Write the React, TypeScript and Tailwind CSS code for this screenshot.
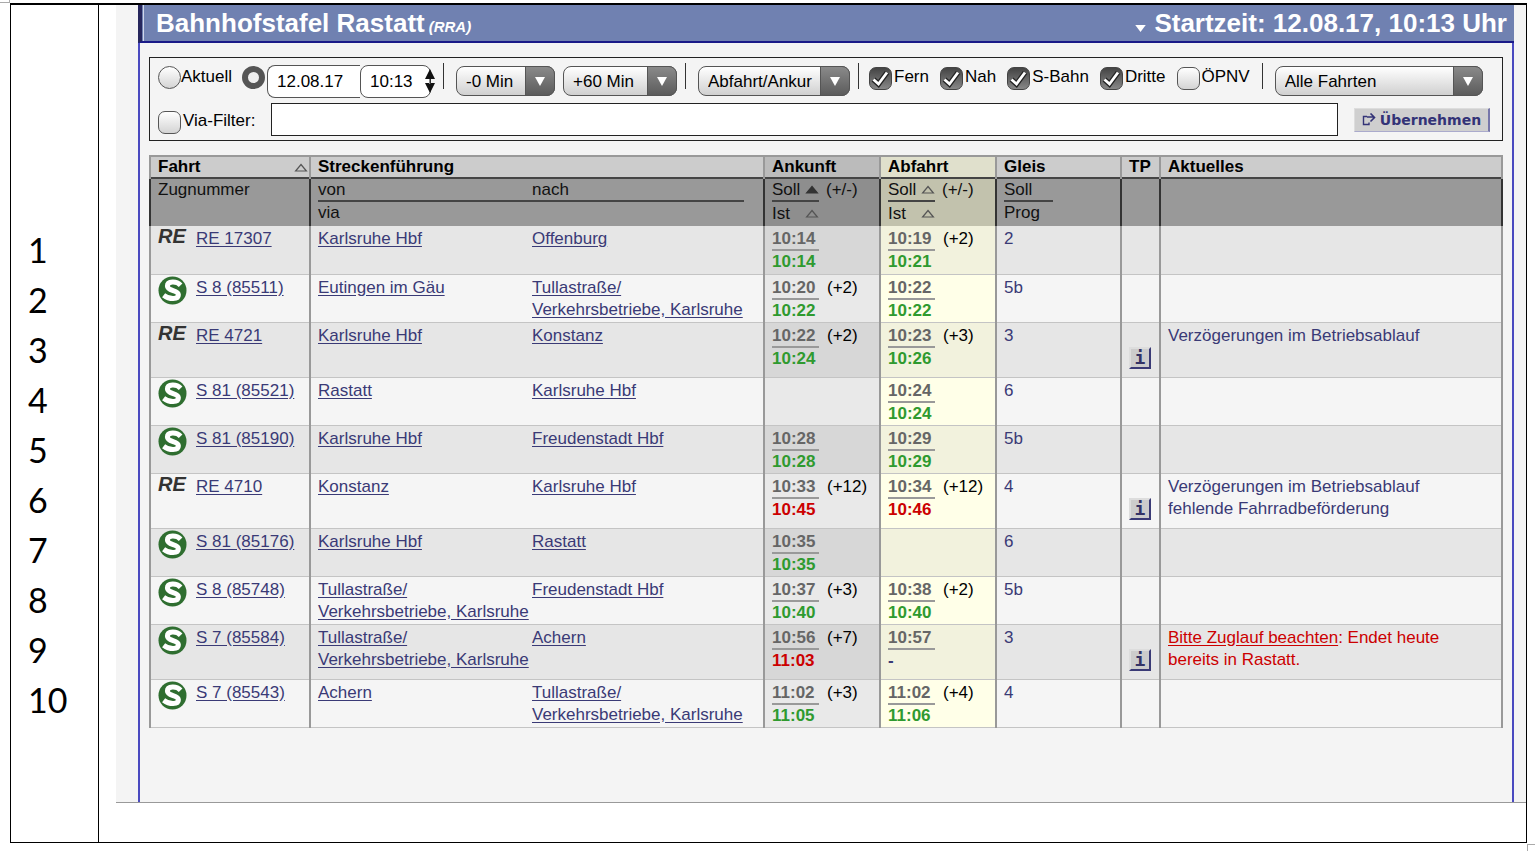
import clsx from "clsx";

type Time = {
  plan: string;
  real: string;
  delay?: string;
  late?: boolean;
};

type Train = {
  kind: "RE" | "S";
  name: string;
  from: string[];
  to: string[];
  arrival?: Time;
  departure?: Time;
  track: string;
  news?: string[];
  warning?: { link: string; text: string[] };
};

const TULLA = ["Tullastraße/", "Verkehrsbetriebe, Karlsruhe"];

const trains: Train[] = [
  {
    kind: "RE",
    name: "RE 17307",
    from: ["Karlsruhe Hbf"],
    to: ["Offenburg"],
    arrival: { plan: "10:14", real: "10:14" },
    departure: { plan: "10:19", real: "10:21", delay: "(+2)" },
    track: "2",
  },
  {
    kind: "S",
    name: "S 8 (85511)",
    from: ["Eutingen im Gäu"],
    to: TULLA,
    arrival: { plan: "10:20", real: "10:22", delay: "(+2)" },
    departure: { plan: "10:22", real: "10:22" },
    track: "5b",
  },
  {
    kind: "RE",
    name: "RE 4721",
    from: ["Karlsruhe Hbf"],
    to: ["Konstanz"],
    arrival: { plan: "10:22", real: "10:24", delay: "(+2)" },
    departure: { plan: "10:23", real: "10:26", delay: "(+3)" },
    track: "3",
    news: ["Verzögerungen im Betriebsablauf"],
  },
  {
    kind: "S",
    name: "S 81 (85521)",
    from: ["Rastatt"],
    to: ["Karlsruhe Hbf"],
    departure: { plan: "10:24", real: "10:24" },
    track: "6",
  },
  {
    kind: "S",
    name: "S 81 (85190)",
    from: ["Karlsruhe Hbf"],
    to: ["Freudenstadt Hbf"],
    arrival: { plan: "10:28", real: "10:28" },
    departure: { plan: "10:29", real: "10:29" },
    track: "5b",
  },
  {
    kind: "RE",
    name: "RE 4710",
    from: ["Konstanz"],
    to: ["Karlsruhe Hbf"],
    arrival: { plan: "10:33", real: "10:45", delay: "(+12)", late: true },
    departure: { plan: "10:34", real: "10:46", delay: "(+12)", late: true },
    track: "4",
    news: ["Verzögerungen im Betriebsablauf", "fehlende Fahrradbeförderung"],
  },
  {
    kind: "S",
    name: "S 81 (85176)",
    from: ["Karlsruhe Hbf"],
    to: ["Rastatt"],
    arrival: { plan: "10:35", real: "10:35" },
    track: "6",
  },
  {
    kind: "S",
    name: "S 8 (85748)",
    from: TULLA,
    to: ["Freudenstadt Hbf"],
    arrival: { plan: "10:37", real: "10:40", delay: "(+3)" },
    departure: { plan: "10:38", real: "10:40", delay: "(+2)" },
    track: "5b",
  },
  {
    kind: "S",
    name: "S 7 (85584)",
    from: TULLA,
    to: ["Achern"],
    arrival: { plan: "10:56", real: "11:03", delay: "(+7)", late: true },
    departure: { plan: "10:57", real: "-" },
    track: "3",
    warning: {
      link: "Bitte Zuglauf beachten",
      text: [": Endet heute", "bereits in Rastatt."],
    },
  },
  {
    kind: "S",
    name: "S 7 (85543)",
    from: ["Achern"],
    to: TULLA,
    arrival: { plan: "11:02", real: "11:05", delay: "(+3)" },
    departure: { plan: "11:02", real: "11:06", delay: "(+4)" },
    track: "4",
  },
];

const products = [
  { id: "fern", label: "Fern", checked: true },
  { id: "nah", label: "Nah", checked: true },
  { id: "sbahn", label: "S-Bahn", checked: true },
  { id: "dritte", label: "Dritte", checked: true },
  { id: "oepnv", label: "ÖPNV", checked: false },
];

function SortIcon({ active = false }: { active?: boolean }) {
  return (
    <svg viewBox="0 0 14 9" className="h-[9px] w-[14px] shrink-0">
      <path
        d="M7 1.5 L12.4 8 H1.6 Z"
        fill={active ? "#333" : "none"}
        stroke={active ? "#333" : "#555"}
        strokeWidth="1.2"
      />
    </svg>
  );
}

function SBahnLogo() {
  return (
    <svg viewBox="0 0 30 30" className="h-[30px] w-[30px] shrink-0" aria-label="S-Bahn">
      <circle cx="14.5" cy="15.5" r="14" fill="#2f6e30" />
      <path
        d="M22.6 10.2 C18.5 5.8 9.4 6 9.4 11 C9.4 16.4 20.4 14.8 20.4 19.8 C20.4 24.8 11.5 24.8 5.6 20.2"
        fill="none"
        stroke="#fff"
        strokeWidth="5"
      />
    </svg>
  );
}

function Check({ id, label, checked }: { id: string; label: string; checked: boolean }) {
  return (
    <div className="flex items-start">
      <span className="relative mt-1 h-[23px] w-[23px]">
        <input
          type="checkbox"
          id={id}
          defaultChecked={checked}
          className="peer block h-[23px] w-[23px] appearance-none rounded-[7px] border border-[#555] bg-linear-to-b from-white to-[#d4d4d4] checked:border-[#444] checked:from-[#444] checked:to-[#888]"
        />
        <svg
          viewBox="0 0 23 23"
          className="pointer-events-none absolute inset-0 hidden h-[23px] w-[23px] peer-checked:block"
        >
          <path d="M4.5 12.5 L9.5 17 L18 5.5" fill="none" stroke="#222" strokeWidth="5.4" />
          <path d="M4.5 12.5 L9.5 17 L18 5.5" fill="none" stroke="#fff" strokeWidth="2.8" />
        </svg>
      </span>
      <label htmlFor={id} className="ml-0.5">
        {label}
      </label>
    </div>
  );
}

function Select({ label, value, className }: { label: string; value: string; className: string }) {
  return (
    <div className={clsx("relative mt-[3px] h-[30px]", className)}>
      <select
        aria-label={label}
        className="block h-full w-full appearance-none rounded-lg border border-[#555] bg-linear-to-b from-white to-[#d0d0d0] pr-7 pl-[9px] text-black"
      >
        <option>{value}</option>
      </select>
      <span className="pointer-events-none absolute inset-y-0 right-0 flex w-[30px] items-center justify-center rounded-r-lg border border-[#555] bg-linear-to-b from-[#8a8a8a] to-[#5c5c5c]">
        <svg viewBox="0 0 10 9" className="h-[9px] w-[10px]">
          <path d="M0 0 H10 L5 9 Z" fill="#fff" />
        </svg>
      </span>
    </div>
  );
}

function Divider({ className }: { className: string }) {
  return <span className={clsx("h-[26px] w-px shrink-0 bg-[#333]", className)} />;
}

function Links({ lines }: { lines: string[] }) {
  return (
    <a href="#" className="block whitespace-nowrap pt-0.5 underline underline-offset-2">
      {lines.map((line) => (
        <span key={line} className="block">
          {line}
        </span>
      ))}
    </a>
  );
}

function TimeCell({ time }: { time?: Time }) {
  if (!time) return null;

  return (
    <div className="flex gap-2 leading-[21px]">
      <div className="w-[47px] font-bold">
        <div className="border-b-2 border-[#999] pt-0.5 text-[#666]">{time.plan}</div>
        <div
          className={clsx(
            time.real === "-" ? "text-[#3a3a76]" : time.late ? "text-[#cc0000]" : "text-[#2f9a2f]"
          )}
        >
          {time.real}
        </div>
      </div>
      <span className="pt-0.5 text-black">{time.delay}</span>
    </div>
  );
}

function TimeHead({ active }: { active?: boolean }) {
  return (
    <div className="flex gap-[7px]">
      <div className="w-[47px]">
        <div className="flex h-[23px] items-center justify-between border-b-2 border-[#444]">
          Soll
          <SortIcon active={active} />
        </div>
        <div className="flex h-[22px] items-center justify-between">
          Ist
          <SortIcon />
        </div>
      </div>
      <span>(+/-)</span>
    </div>
  );
}

function Filters() {
  return (
    <form className="mx-[9px] mt-[14px] flex h-[84px] flex-col justify-between border border-[#222] px-2 pt-[5px] pb-1 text-[17px] leading-[27px]">
      <div className="flex items-start pr-[11px]">
        <input
          type="radio"
          name="zeit"
          id="aktuell"
          className="mt-[3px] h-[23px] w-[23px] appearance-none rounded-full border border-[#555] bg-linear-to-b from-white to-[#d4d4d4]"
        />
        <label htmlFor="aktuell">Aktuell</label>
        <input
          type="radio"
          name="zeit"
          defaultChecked
          aria-label="Startzeit"
          className="mt-[3px] ml-2.5 h-[23px] w-[23px] appearance-none rounded-full border-[6px] border-[#555] bg-[#eee]"
        />
        <div className="mt-0.5 ml-0.5 flex h-[33px]">
          <input
            aria-label="Datum"
            defaultValue="12.08.17"
            className="w-[93px] rounded-l-lg border border-r-0 border-[#555] bg-white pl-[9px]"
          />
          <div className="relative">
            <input
              aria-label="Uhrzeit"
              defaultValue="10:13"
              className="h-full w-[71px] rounded-lg border border-[#555] bg-white pl-[9px]"
            />
            <svg viewBox="0 0 10 24" className="absolute top-1 -right-1 h-6 w-2.5">
              <path d="M5 0 L10 10 H0 Z M5 24 L10 14 H0 Z M4.5 9 H5.5 V15 H4.5 Z" fill="#111" />
            </svg>
          </div>
        </div>
        <Divider className="ml-3" />
        <Select label="Minuten vorher" value="-0 Min" className="ml-3 w-[99px]" />
        <Select label="Minuten nachher" value="+60 Min" className="ml-2 w-[114px]" />
        <Divider className="ml-2" />
        <Select label="Richtung" value="Abfahrt/Ankur" className="ml-3 w-[152px]" />
        <Divider className="ml-2" />
        <div className="ml-2.5 flex gap-[11px]">
          {products.map((product) => (
            <Check key={product.id} {...product} />
          ))}
        </div>
        <Divider className="ml-3" />
        <Select label="Fahrten" value="Alle Fahrten" className="ml-3 flex-1" />
      </div>

      <div className="flex items-start">
        <div className="pt-1">
          <Check id="via" label="Via-Filter:" checked={false} />
        </div>
        <input
          aria-label="Via-Filter"
          className="ml-4 h-[33px] min-w-0 flex-1 border border-[#222] bg-white px-2"
        />
        <button
          type="button"
          className="mt-[5px] mr-1 ml-4 flex h-6 w-[136px] items-center justify-center gap-1 border border-r-2 border-[#ddd] border-r-[#7777aa] border-b-[#aaaacc] bg-[#cfcfcf] font-['DejaVu_Sans',sans-serif] text-sm leading-5 font-bold text-[#333377]"
        >
          <svg viewBox="0 0 14 14" className="h-[14px] w-[14px]" fill="none" stroke="#333377">
            <path d="M5 3.5 H1.5 V11.5 H7 V9.5" strokeWidth="1.4" />
            <path d="M5 4 H12 M8.5 0.5 L12.5 4.5 L8.5 8.5" strokeWidth="1.6" />
          </svg>
          Übernehmen
        </button>
      </div>
    </form>
  );
}

const cell = "border-x-2 border-[#999] px-[7px] align-top";
const bodyCell = "border-x-2 border-b border-[#999] border-b-[#c4c4c4] px-[7px] align-top";
const darkCell = "border-x-2 border-t-2 border-[#333] border-t-[#444] px-[7px] align-top font-normal";

function Board() {
  return (
    <table className="mx-[9px] mt-[14px] w-[calc(100%-18px)] table-fixed border-collapse text-left text-[17px] leading-[22px] text-[#3a3a76]">
      <colgroup>
        <col className="w-[160px]" />
        <col className="w-[454px]" />
        <col className="w-[116px]" />
        <col className="w-[116px]" />
        <col className="w-[125px]" />
        <col className="w-[39px]" />
        <col />
      </colgroup>
      <thead className="text-black">
        <tr className="h-[22px] border-t-2 border-[#999] bg-[#cccccc] leading-5">
          <th className={cell}>
            <div className="-mr-1.5 flex items-center justify-between">
              Fahrt
              <SortIcon />
            </div>
          </th>
          <th className={cell}>Streckenführung</th>
          <th className={clsx(cell, "bg-[#bbbbbb]")}>Ankunft</th>
          <th className={clsx(cell, "bg-[#e0e0cc]")}>Abfahrt</th>
          <th className={cell}>Gleis</th>
          <th className={cell}>TP</th>
          <th className={cell}>Aktuelles</th>
        </tr>
        <tr className="h-[48px] bg-[#999999] leading-[21px] text-[#111]">
          <th className={darkCell}>Zugnummer</th>
          <th className={darkCell}>
            <div className="mr-3 flex border-b-2 border-[#444]">
              <span className="w-[214px]">von</span>
              <span>nach</span>
            </div>
            via
          </th>
          <th className={clsx(darkCell, "bg-[#8e8e8e]")}>
            <TimeHead active />
          </th>
          <th className={clsx(darkCell, "bg-[#c2c2ad]")}>
            <TimeHead />
          </th>
          <th className={darkCell}>
            <div className="h-[23px] w-[49px] border-b-2 border-[#444]">Soll</div>
            Prog
          </th>
          <th className={darkCell}></th>
          <th className={darkCell}></th>
        </tr>
      </thead>
      <tbody>
        {trains.map((train, index) => {
          const odd = index % 2 === 0;
          const hasInfo = train.news || train.warning;

          return (
            <tr
              key={train.name}
              className={clsx(
                odd ? "bg-[#e6e6e6]" : "bg-[#f5f5f5]",
                hasInfo ? "h-[55px]" : "h-[48px]"
              )}
            >
              <td className={bodyCell}>
                <div className="flex items-start">
                  <span className="h-[22px] w-[38px] shrink-0">
                    {train.kind === "RE" ? (
                      <span className="block text-xl leading-5 font-bold text-[#333] italic">
                        RE
                      </span>
                    ) : (
                      <SBahnLogo />
                    )}
                  </span>
                  <Links lines={[train.name]} />
                </div>
              </td>
              <td className={bodyCell}>
                <div className="flex">
                  <div className="w-[214px] shrink-0">
                    <Links lines={train.from} />
                  </div>
                  <Links lines={train.to} />
                </div>
              </td>
              <td className={clsx(bodyCell, odd ? "bg-[#d7d7d7]" : "bg-[#e9e9e9]")}>
                <TimeCell time={train.arrival} />
              </td>
              <td className={clsx(bodyCell, odd ? "bg-[#f2f2dd]" : "bg-[#ffffe8]")}>
                <TimeCell time={train.departure} />
              </td>
              <td className={clsx(bodyCell, "pt-0.5")}>{train.track}</td>
              <td className={bodyCell}>
                {hasInfo && (
                  <button
                    type="button"
                    aria-label="Information"
                    className="mt-6 flex h-[22px] w-[22px] items-center justify-center border-2 border-[#ddd] border-r-[#3a3a76] border-b-[#3a3a76] bg-[#ccc] font-['DejaVu_Sans_Mono',monospace] text-lg leading-5 font-bold text-[#333366]"
                  >
                    i
                  </button>
                )}
              </td>
              <td className={clsx(bodyCell, "pt-0.5")}>
                {train.news?.map((line) => (
                  <div key={line}>{line}</div>
                ))}
                {train.warning && (
                  <div className="text-[#cc0000]">
                    <p>
                      <a href="#" className="underline underline-offset-2">
                        {train.warning.link}
                      </a>
                      {train.warning.text[0]}
                    </p>
                    <p>{train.warning.text[1]}</p>
                  </div>
                )}
              </td>
            </tr>
          );
        })}
      </tbody>
    </table>
  );
}

export default function App() {
  return (
    <div className="relative min-h-screen bg-white pt-[3px] pr-2 pb-2 pl-2.5 font-['Liberation_Sans',Arial,sans-serif] text-black">
      {/* page corner marks */}
      <span className="absolute top-0 left-0 h-[3px] w-2.5 border-r border-b border-[#aaa]" />
      <span className="absolute right-0 bottom-0 h-[7px] w-2 border-t border-l border-[#aaa]" />

      <div className="flex min-h-[840px] border border-t-2 border-black">
        <ol className="w-[88px] shrink-0 border-r border-black pt-[220px] pl-[17px] font-['Lato',sans-serif] text-[34px] leading-[50px]">
          {trains.map((train, index) => (
            <li key={train.name}>{index + 1}</li>
          ))}
        </ol>

        <div className="flex-1 pb-[39px] pl-[17px]">
          <div className="h-full border-b border-[#999] bg-[#f4f4f4] pr-3 pl-[22px]">
            <main className="h-full border-x-2 border-[#4a4ac0]">
              <header className="-mx-0.5 flex h-[38px] border-b-2 border-l-4 border-[#1a1a88] border-l-[#26265c] bg-[#7081b1] font-bold text-white">
                <div className="ml-px flex flex-1 items-center justify-between border-l border-[#d0d6ea] pr-[7px] pl-3 text-[26px] leading-9">
                  <h1>
                    Bahnhofstafel Rastatt
                    <small className="ml-1 text-[15px] leading-4 italic">(RRA)</small>
                  </h1>
                  <button type="button" className="flex items-center gap-2">
                    <svg viewBox="0 0 12 8" className="mt-2.5 h-[7px] w-[11px]">
                      <path d="M0 0 H12 L6 8 Z" fill="#fff" />
                    </svg>
                    Startzeit: 12.08.17, 10:13 Uhr
                  </button>
                </div>
              </header>
              <Filters />
              <Board />
            </main>
          </div>
        </div>
      </div>
    </div>
  );
}
